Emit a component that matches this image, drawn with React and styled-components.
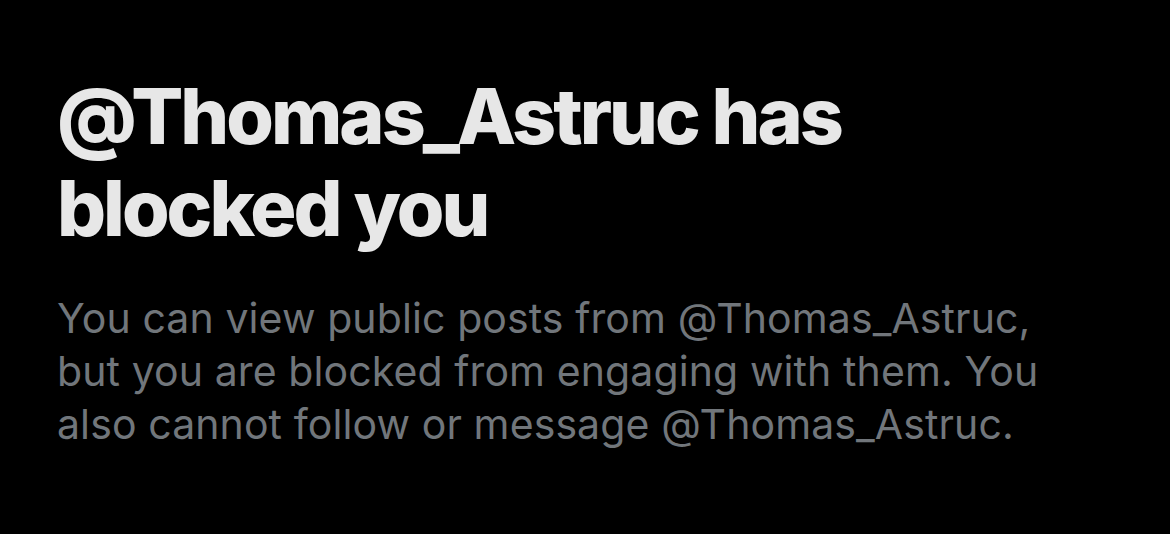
import React from 'react';
import styled, { createGlobalStyle } from 'styled-components';

const Global = createGlobalStyle`
  html, body {
    margin: 0;
    background: #000;
  }
`

const Page = styled.div`
  min-height: 534px;
  background-color: #000;
  padding: 70px 57px 0 57px;
  box-sizing: border-box;
  font-family: Inter, "Liberation Sans", Arial, sans-serif;
`

const Title = styled.h1`
  margin: 0;
  color: #e7e7e7;
  font-size: 77px;
  font-weight: 800;
  line-height: 92px;
  letter-spacing: -3px;
  max-width: 860px;
`

const Body = styled.p`
  margin: 38px 0 0 0;
  color: #71767b;
  font-size: 41px;
  font-weight: 400;
  line-height: 53px;
  letter-spacing: 0.1px;
  max-width: 1100px;
`

const App = () => {
  return (
    <Page>
      <Global />
      <Title>@Thomas_Astruc has blocked you</Title>
      <Body>
        You can view public posts from @Thomas_Astruc,<br />
        but you are blocked from engaging with them. You<br />
        also cannot follow or message @Thomas_Astruc.
      </Body>
    </Page>
  )
}

export default App;
